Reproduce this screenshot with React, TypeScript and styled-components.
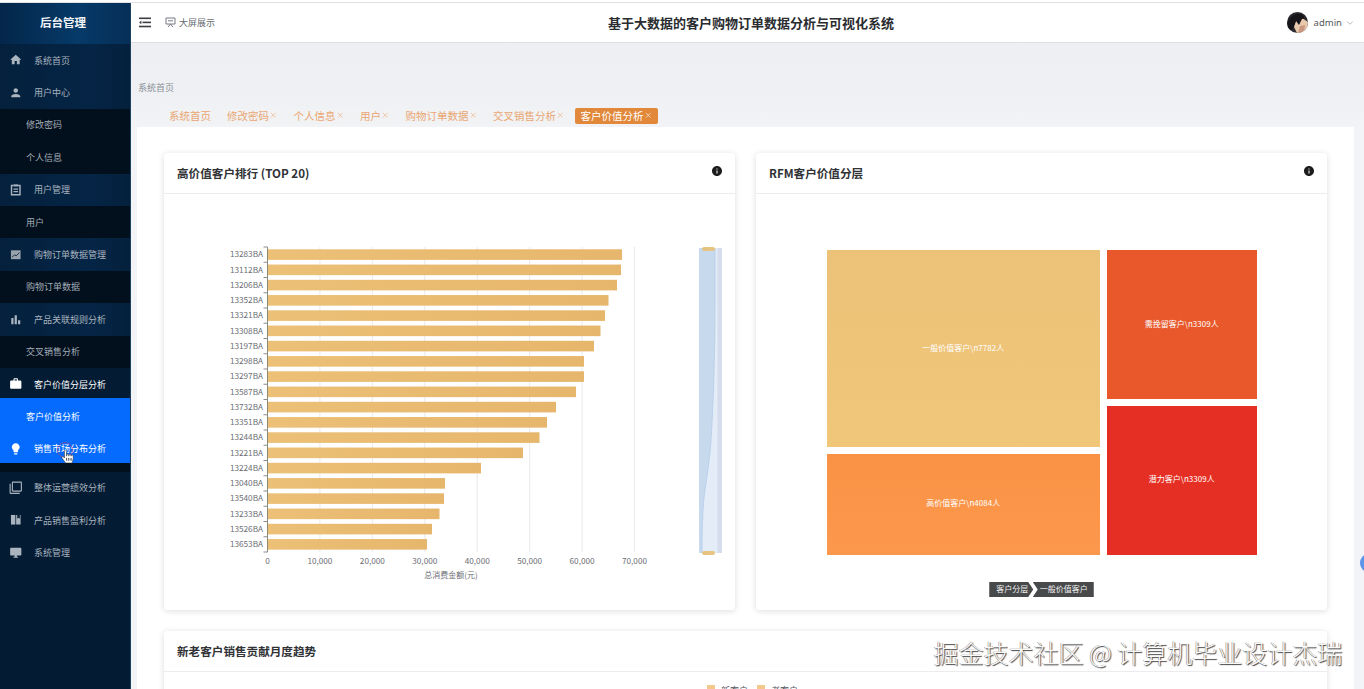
import React from "react";
import styled, { createGlobalStyle } from "styled-components";
import { ChevronDown, X } from "lucide-react";
import { FaHandPointer } from "react-icons/fa";
import {
  MdHome, MdPerson, MdBarChart, MdWork, MdLightbulb,
  MdFilterNone, MdDesktopWindows, MdInfo,
} from "react-icons/md";

const CJK = `"Noto Sans CJK SC", "Noto Sans", sans-serif`;

const Global = createGlobalStyle`
  html, body { margin: 0; padding: 0; height: 100%; overflow: hidden; background: #fff; }
  body { font-family: ${CJK}; }
  * { box-sizing: border-box; }
`;

const Page = styled.div`
  position: relative;
  display: grid;
  grid-template-columns: 131px 1fr;
  height: 689px;
  padding-top: 3px;
  overflow: hidden;
  background: linear-gradient(#fff 0 2px, #dfe1e5 2px 3px, #fff 3px);
`;

const Sidebar = styled.aside`
  background: #031b33;
  border-right: 1px solid #1d4260;
  height: 686px;
  overflow: hidden;
`;
const Brand = styled.div`
  height: 41px;
  display: flex;
  align-items: center;
  justify-content: center;
  padding: 0 4px 3px 0;
  color: #f2f5f8;
  font-size: 11.5px;
  font-weight: 700;
  background: linear-gradient(90deg, #04264a, #063a68 60%, #052f57);
`;
const Row = styled.div<{ $active?: boolean; $tone?: boolean }>`
  height: 32.4px;
  display: flex;
  align-items: center;
  padding-left: 9px;
  gap: 11.5px;
  font-size: 9px;
  color: ${(p) => (p.$active ? "#ffffff" : "#a9b4bf")};
  background: ${(p) => (p.$tone ? "linear-gradient(90deg,#04203c,#052546 70%,#04203c)" : "transparent")};
  svg { flex: none; width: 13.5px; height: 13.5px; }
`;
const SubRow = styled.div`
  height: 32.4px;
  display: flex;
  align-items: center;
  padding-left: 26px;
  font-size: 9px;
  color: #a2adb7;
  background: #020f1d;
`;
const ActiveSubRow = styled(SubRow)`
  height: 34.4px;
  margin-top: -2px;
  padding-top: 2px;
  color: #fff;
  background: #056bff;
`;
const BlueRow = styled(Row)`
  height: 30.4px;
  padding-top: 2px;
  background: #056bff;
  color: #fff;
`;
const MenuGap = styled.div`
  height: 8.5px;
  background: #020f1d;
`;

const Main = styled.main`
  display: flex;
  flex-direction: column;
  min-width: 0;
  height: 686px;
  background: linear-gradient(#eceef1, #eef0f3 90px, #f3f4f7 130px);
`;
const Header = styled.header`
  height: 40px;
  flex: none;
  display: grid;
  grid-template-columns: 1fr auto 1fr;
  align-items: center;
  background: #fff;
  border-bottom: 1px solid #dcdee3;
`;
const HeaderLeft = styled.div`
  display: flex;
  align-items: center;
  padding-left: 8px;
`;
const BoardLink = styled.span`
  display: flex;
  align-items: center;
  gap: 3px;
  margin-left: 13px;
  font-size: 9px;
  color: #666a70;
`;
const SystemTitle = styled.h1`
  margin: 0;
  font-size: 13px;
  font-weight: 700;
  color: #2a2c30;
  transform: translateX(3.5px);
`;
const UserBox = styled.div`
  display: flex;
  align-items: center;
  justify-content: flex-end;
  gap: 6px;
  padding-right: 9px;
  font-family: "Noto Sans", sans-serif;
  font-size: 9.5px;
  color: #55585e;
  svg:last-child { margin-left: -3px; }
`;
const Crumb = styled.div`
  margin: 37px 0 0 7px;
  height: 16px;
  line-height: 16px;
  font-size: 9px;
  color: #8a8f96;
`;
const Tabs = styled.div`
  display: flex;
  gap: 4px;
  margin: 11.5px 0 0 32px;
  height: 16px;
`;
const Tab = styled.div<{ $active?: boolean }>`
  display: flex;
  align-items: center;
  padding: 0 6px;
  height: 16px;
  font-size: 10.5px;
  border-radius: ${(p) => (p.$active ? "2px" : "0")};
  color: ${(p) => (p.$active ? "#fff" : "#e9a672")};
  background: ${(p) => (p.$active ? "#e2883a" : "#f1f2f4")};
`;
const Panel = styled.div`
  margin: 3.5px 10px 0 6px;
  flex: 1;
  min-height: 0;
  padding: 26px 27px 0;
  background: #fff;
  overflow: hidden;
`;
const Cards = styled.div`
  display: grid;
  grid-template-columns: 571px 571px;
  gap: 21px;
`;
const Card = styled.section<{ $wide?: boolean }>`
  grid-column: ${(p) => (p.$wide ? "1 / -1" : "auto")};
  height: ${(p) => (p.$wide ? "300px" : "457px")};
  background: #fff;
  border-radius: 3px;
  box-shadow: 0 1px 6px rgba(0, 0, 0, 0.14);
`;
const CardHead = styled.div`
  height: 41px;
  display: flex;
  align-items: center;
  justify-content: space-between;
  padding: 0 13px;
  border-bottom: 1px solid #ececee;
  font-size: 11.6px;
  font-weight: 700;
  color: #303236;
`;
const InfoDot = styled.span`
  display: flex;
  margin: -5px -1px 0 0;
  color: #1c1c1c;
`;
const ChartSvg = styled.svg`
  display: block;
  font-family: ${CJK};
`;
const Legend = styled.div`
  display: flex;
  justify-content: center;
  gap: 9px;
  padding: 13px 0 0 14px;
  font-size: 9px;
  line-height: 12px;
  color: #55585e;
`;
const LegendItem = styled.span`
  display: flex;
  align-items: flex-start;
  gap: 6px;
`;
const LegendSwatch = styled.i<{ $color: string }>`
  width: 8px;
  height: 8px;
  background: ${(p) => p.$color};
`;

const TreeBody = styled.div`
  display: flex;
  flex-direction: column;
  align-items: center;
  padding-top: 56px;
`;
const TreeMap = styled.div`
  display: flex;
  gap: 7px;
  width: 430px;
  height: 304.5px;
`;
const TreeCol = styled.div<{ $w: number; $gap: number }>`
  width: ${(p) => p.$w}px;
  display: flex;
  flex-direction: column;
  gap: ${(p) => p.$gap}px;
`;
const Tile = styled.div<{ $h: number; $bg: string }>`
  height: ${(p) => p.$h}px;
  display: flex;
  align-items: center;
  justify-content: center;
  background: ${(p) => p.$bg};
  color: #fff;
  font-size: 8px;
  padding-bottom: 3px;
`;
const TreePath = styled.div`
  display: flex;
  margin-top: 27.5px;
  height: 15px;
  font-size: 8px;
  color: #f0f0f0;
`;
const PathFirst = styled.span`
  width: 44px;
  padding-left: 7px;
  line-height: 14px;
  background: #48494b;
  clip-path: polygon(0 0, 39px 0, 100% 50%, 39px 100%, 0 100%);
`;
const PathSecond = styled.span`
  width: 61px;
  margin-left: -0.5px;
  padding-left: 7px;
  line-height: 14px;
  background: #48494b;
  clip-path: polygon(0 0, 100% 0, 100% 100%, 0 100%, 5px 50%);
`;
const Watermark = styled.div`
  position: absolute;
  left: 933.5px;
  top: 634px;
  font-size: 25px;
  font-weight: 300;
  line-height: 36px;
  white-space: nowrap;
  color: #fafafa;
  text-shadow: 1px 1px 1px #404040, -0.5px -0.5px 0.5px #808080;
`;
const HandCursor = styled.div`
  position: absolute;
  left: 57px;
  top: 442px;
  width: 16px;
  height: 16px;
  border: 1px solid rgba(170, 70, 130, 0.65);
  border-radius: 50%;
  color: #fff;
  svg { position: absolute; left: 3px; top: 7px; stroke: #222; stroke-width: 20px; }
`;
const EdgeDot = styled.div`
  position: absolute;
  right: -12px;
  top: 554px;
  width: 16px;
  height: 18px;
  border-radius: 50%;
  background: #5d93e8;
`;

const names = ["13283BA","13112BA","13206BA","13352BA","13321BA","13308BA","13197BA","13298BA","13297BA","13587BA","13732BA","13351BA","13244BA","13221BA","13224BA","13040BA","13540BA","13233BA","13526BA","13653BA"];
const ends = [622,621,617,608.5,605,600.5,594,584,584,576,556,547,539.5,523,481,445,444,439.5,432,427];
const ticks = [0,10,20,30,40,50,60,70];
const X0 = 267.5;
const STEP_X = 52.43;
const TOP = 247;
const STEP_Y = 15.25;

const BarChart = () => (
  <ChartSvg width={571} height={416} viewBox="164 194 571 416">
    <defs>
      <linearGradient id="bar" x1="0" x2="1" y1="0" y2="0">
        <stop offset="0" stopColor="#ecc077" />
        <stop offset="1" stopColor="#e6b66c" />
      </linearGradient>
      <linearGradient id="handle" x1="0" x2="1">
        <stop offset="0" stopColor="#e3c17f" />
        <stop offset="1" stopColor="#e8c582" />
      </linearGradient>
    </defs>
    {ticks.slice(1).map((t, i) => (
      <line key={t} x1={X0 + STEP_X * (i + 1)} x2={X0 + STEP_X * (i + 1)} y1={TOP} y2={552} stroke="#e9e9ec" strokeWidth={1} />
    ))}
    {names.map((n, i) => (
      <g key={n}>
        <rect x={268} y={TOP + i * STEP_Y + 2.3} width={ends[i] - 268} height={10.6} fill="url(#bar)" />
        <text x={263} y={TOP + i * STEP_Y + 10.4} textAnchor="end" fontSize={8.2} fill="#6c6e74">{n}</text>
        <line x1={263.5} x2={267.5} y1={TOP + i * STEP_Y} y2={TOP + i * STEP_Y} stroke="#6e7079" strokeWidth={0.8} />
      </g>
    ))}
    <line x1={263.5} x2={267.5} y1={552} y2={552} stroke="#6e7079" strokeWidth={0.8} />
    <line x1={X0} x2={X0} y1={TOP} y2={552} stroke="#8b8a74" strokeWidth={1} />
    {ticks.map((t, i) => (
      <text key={t} x={X0 + STEP_X * i} y={564} textAnchor="middle" fontSize={8.2} fill="#6c6e74">
        {t === 0 ? "0" : `${t},000`}
      </text>
    ))}
    <text x={451} y={578} textAnchor="middle" fontSize={8} fill="#6c6e74">总消费金额(元)</text>
    <rect x={699} y={248} width={23} height={305} fill="#e3ecf7" />
    <rect x={717.5} y={248} width={4.5} height={305} fill="#d5dcec" />
    <path d="M699 248 H715 V300 C715 360 713 410 711 440 C709 470 704 490 703 510 C702 530 702 540 702 553 H699 Z" fill="#c7d9ed" />
    <path d="M715 248 V300 C715 360 713 410 711 440 C709 470 704 490 703 510 C702 530 702 540 702 553" fill="none" stroke="#b4cbe8" strokeWidth={0.8} />
    <rect x={702} y={247} width={13} height={4} rx={2} fill="url(#handle)" />
    <rect x={702} y={551} width={13} height={4} rx={2} fill="url(#handle)" />
  </ChartSvg>
);

const Fold = () => (
  <svg width="13" height="11" viewBox="0 0 13 11" fill="#3c3e43">
    <rect x="0" y="0.5" width="12" height="1.6" />
    <rect x="3.5" y="4.6" width="8.5" height="1.6" />
    <rect x="0" y="8.7" width="12" height="1.6" />
    <path d="M0 5.4 L2.4 3.6 V7.2 Z" />
  </svg>
);
const Board = () => (
  <svg width="11" height="11" viewBox="0 0 11 11" fill="none" stroke="#777a80" strokeWidth="1">
    <path d="M1 1 H10 V7 H1 Z" />
    <path d="M3.2 10 L5.5 7 L7.8 10" />
    <path d="M3 3.8 H8" />
  </svg>
);
const Avatar = () => (
  <svg width="21" height="21" viewBox="0 0 21 21">
    <clipPath id="av"><circle cx="10.5" cy="10.5" r="10.5" /></clipPath>
    <g clipPath="url(#av)">
      <rect width="21" height="21" fill="#2c2a30" />
      <path d="M9 9 L15 6 L21 10 V21 H10 L7 15 Z" fill="#e9c9ad" />
      <path d="M0 12 C3 3 9 1 14 2 C18 4 18 7 15 7 L12 13 L9 9 L5 18 L0 17 Z" fill="#17151a" />
      <path d="M13 14 L18 13 L17 21 H11 Z" fill="#c9977f" />
    </g>
  </svg>
);
const Ledger = () => (
  <svg viewBox="0 0 14 14" fill="currentColor">
    <path d="M2 2 H6.6 V12 H2 Z" />
    <path d="M7.4 2 H8.6 V6 L10 4.9 L11.2 6 V2 H12 V12 H7.4 Z" />
  </svg>
);
const OrderIcon = () => (
  <svg viewBox="0 0 14 14" fill="none" stroke="currentColor" strokeWidth="1.5">
    <path d="M4.6 2.6 H2.6 V12.2 H11.4 V2.6 H9.4" />
    <rect x="4.6" y="1.4" width="4.8" height="2.2" fill="currentColor" stroke="none" />
    <path d="M4.6 6.4 H9.4 M4.6 9 H9.4" strokeWidth="1.3" />
  </svg>
);
const ChartBox = () => (
  <svg viewBox="0 0 14 14">
    <rect x="2" y="2.4" width="10" height="9.2" fill="#98a3ae" />
    <path d="M3.2 9.6 L5.8 7 L7.4 8.2 L10.8 4.8" fill="none" stroke="#0b2036" strokeWidth="0.9" />
  </svg>
);

export default function App() {
  const close = <X size={8.5} strokeWidth={1.6} />;
  return (
    <Page>
      <Global />
      <Sidebar>
        <Brand>后台管理</Brand>
        <Row $tone><MdHome />系统首页</Row>
        <Row $tone><MdPerson />用户中心</Row>
        <SubRow>修改密码</SubRow>
        <SubRow>个人信息</SubRow>
        <Row $tone><OrderIcon />用户管理</Row>
        <SubRow>用户</SubRow>
        <Row $tone><ChartBox />购物订单数据管理</Row>
        <SubRow>购物订单数据</SubRow>
        <Row $tone><MdBarChart />产品关联规则分析</Row>
        <SubRow>交叉销售分析</SubRow>
        <Row $active><MdWork />客户价值分层分析</Row>
        <ActiveSubRow>客户价值分析</ActiveSubRow>
        <BlueRow $active><MdLightbulb />销售市场分布分析</BlueRow>
        <MenuGap />
        <Row><MdFilterNone />整体运营绩效分析</Row>
        <Row><Ledger />产品销售盈利分析</Row>
        <Row><MdDesktopWindows />系统管理</Row>
      </Sidebar>
      <Main>
        <Header>
          <HeaderLeft>
            <Fold />
            <BoardLink><Board />大屏展示</BoardLink>
          </HeaderLeft>
          <SystemTitle>基于大数据的客户购物订单数据分析与可视化系统</SystemTitle>
          <UserBox>
            <Avatar />
            admin
            <ChevronDown size={10} strokeWidth={1} />
          </UserBox>
        </Header>
        <Crumb>系统首页</Crumb>
        <Tabs>
          <Tab>系统首页</Tab>
          <Tab>修改密码{close}</Tab>
          <Tab>个人信息{close}</Tab>
          <Tab>用户{close}</Tab>
          <Tab>购物订单数据{close}</Tab>
          <Tab>交叉销售分析{close}</Tab>
          <Tab $active>客户价值分析{close}</Tab>
        </Tabs>
        <Panel>
          <Cards>
            <Card>
              <CardHead>高价值客户排行 (TOP 20)<InfoDot><MdInfo size={12} /></InfoDot></CardHead>
              <BarChart />
            </Card>
            <Card>
              <CardHead>RFM客户价值分层<InfoDot><MdInfo size={12} /></InfoDot></CardHead>
              <TreeBody>
                <TreeMap>
                  <TreeCol $w={273.5} $gap={7}>
                    <Tile $h={197} $bg="linear-gradient(180deg,#ecc279,#f0c679)">一般价值客户\n7782人</Tile>
                    <Tile $h={100.5} $bg="linear-gradient(180deg,#f99245,#fc984c)">高价值客户\n4084人</Tile>
                  </TreeCol>
                  <TreeCol $w={149.5} $gap={6.5}>
                    <Tile $h={149} $bg="#e8582b">需挽留客户\n3309人</Tile>
                    <Tile $h={149} $bg="#e62f24">潜力客户\n3309人</Tile>
                  </TreeCol>
                </TreeMap>
                <TreePath>
                  <PathFirst>客户分层</PathFirst>
                  <PathSecond>一般价值客户</PathSecond>
                </TreePath>
              </TreeBody>
            </Card>
            <Card $wide>
              <CardHead>新老客户销售贡献月度趋势</CardHead>
              <Legend>
                <LegendItem><LegendSwatch $color="#f3c98b" />新客户</LegendItem>
                <LegendItem><LegendSwatch $color="#f3c98b" />老客户</LegendItem>
              </Legend>
            </Card>
          </Cards>
        </Panel>
      </Main>
      <HandCursor><FaHandPointer size={13} /></HandCursor>
      <EdgeDot />
      <Watermark>掘金技术社区 @ 计算机毕业设计杰瑞</Watermark>
    </Page>
  );
}
